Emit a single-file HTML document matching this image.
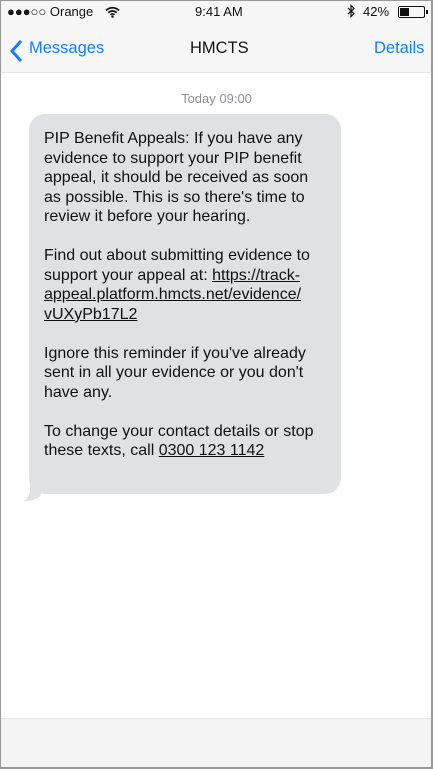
<!DOCTYPE html>
<html><head><style>
*{margin:0;padding:0;box-sizing:border-box}
body{width:433px;height:769px;overflow:hidden;font-family:"Liberation Sans",Arial,sans-serif;background:#fff;position:relative}
.frame{position:absolute;inset:0;border:1px solid #999;border-right-width:2px;border-bottom-width:2px}
.top{position:absolute;left:1px;top:1px;width:430px;height:72px;background:#f7f7f7;border-bottom:1px solid #e6e6e6}
.sb{position:absolute;top:3px;font-size:13px;color:#111}
.nav{position:absolute;top:38px;font-size:16.5px}
.blue{color:#157efb}
.time{position:absolute;top:91px;width:100%;text-align:center;font-size:13px;color:#8e8e93}
.bubble{position:absolute;left:29px;top:114px;width:312px;height:380px;background:#e0e1e3;border-radius:16px;padding:15px 15px;font-size:16px;line-height:19.5px;color:#111}
.bubble u{text-decoration:underline}
.bottom{position:absolute;left:1px;top:718px;width:430px;height:49px;background:#f4f4f4;border-top:1px solid #e6e6e6}
</style></head><body>
<div class="top">
<div class="sb" style="left:6px">●●●○○ Orange</div>
<svg style="position:absolute;left:104px;top:5px" width="15" height="12" viewBox="0 0 15 12"><path d="M1 4.5a9 9 0 0 1 13 0M3.3 6.7a6 6 0 0 1 8.4 0M5.5 8.8a3 3 0 0 1 4 0" stroke="#111" stroke-width="1.7" fill="none"/><circle cx="7.5" cy="10.6" r="1.2" fill="#111"/></svg>
<div class="sb" style="left:194px">9:41 AM</div>
<svg style="position:absolute;left:346px;top:3px" width="9" height="14" viewBox="0 0 9 14"><path d="M1 4l6 5.5-3 3V1.5l3 3L1 10" stroke="#111" stroke-width="1.2" fill="none"/></svg>
<div class="sb" style="left:362px">42%</div>
<div style="position:absolute;left:397px;top:5px;width:27px;height:12px;border:1px solid #111;border-radius:2px;padding:1px"><div style="width:9px;height:8px;background:#111"></div></div>
<div style="position:absolute;left:425px;top:9px;width:2px;height:4px;background:#111"></div>
<svg style="position:absolute;left:9px;top:38px" width="14" height="24" viewBox="0 0 14 24"><path d="M11 2L2 12l9 10" stroke="#157efb" stroke-width="3" fill="none"/></svg>
<div class="nav blue" style="left:28px">Messages</div>
<div class="nav" style="left:189px;color:#111">HMCTS</div>
<div class="nav blue" style="left:373px">Details</div>
</div>
<div class="time">Today 09:00</div>
<svg style="position:absolute;left:20px;top:470px" width="30" height="32" viewBox="0 0 30 32"><path d="M10 0v20c0 5-3 10-7 11 7 1 14-2 17-5L30 0z" fill="#e0e1e3"/></svg>
<div class="bubble">PIP Benefit Appeals: If you have any evidence to support your PIP benefit appeal, it should be received as soon as possible. This is so there's time to review it before your hearing.<br><br>Find out about submitting evidence to support your appeal at: <u>https://track-appeal.platform.hmcts.net/evidence/ vUXyPb17L2</u><br><br>Ignore this reminder if you've already sent in all your evidence or you don't have any.<br><br>To change your contact details or stop these texts, call <u>0300 123 1142</u></div>
<div class="bottom"></div>
<div class="frame"></div>
</body></html>
